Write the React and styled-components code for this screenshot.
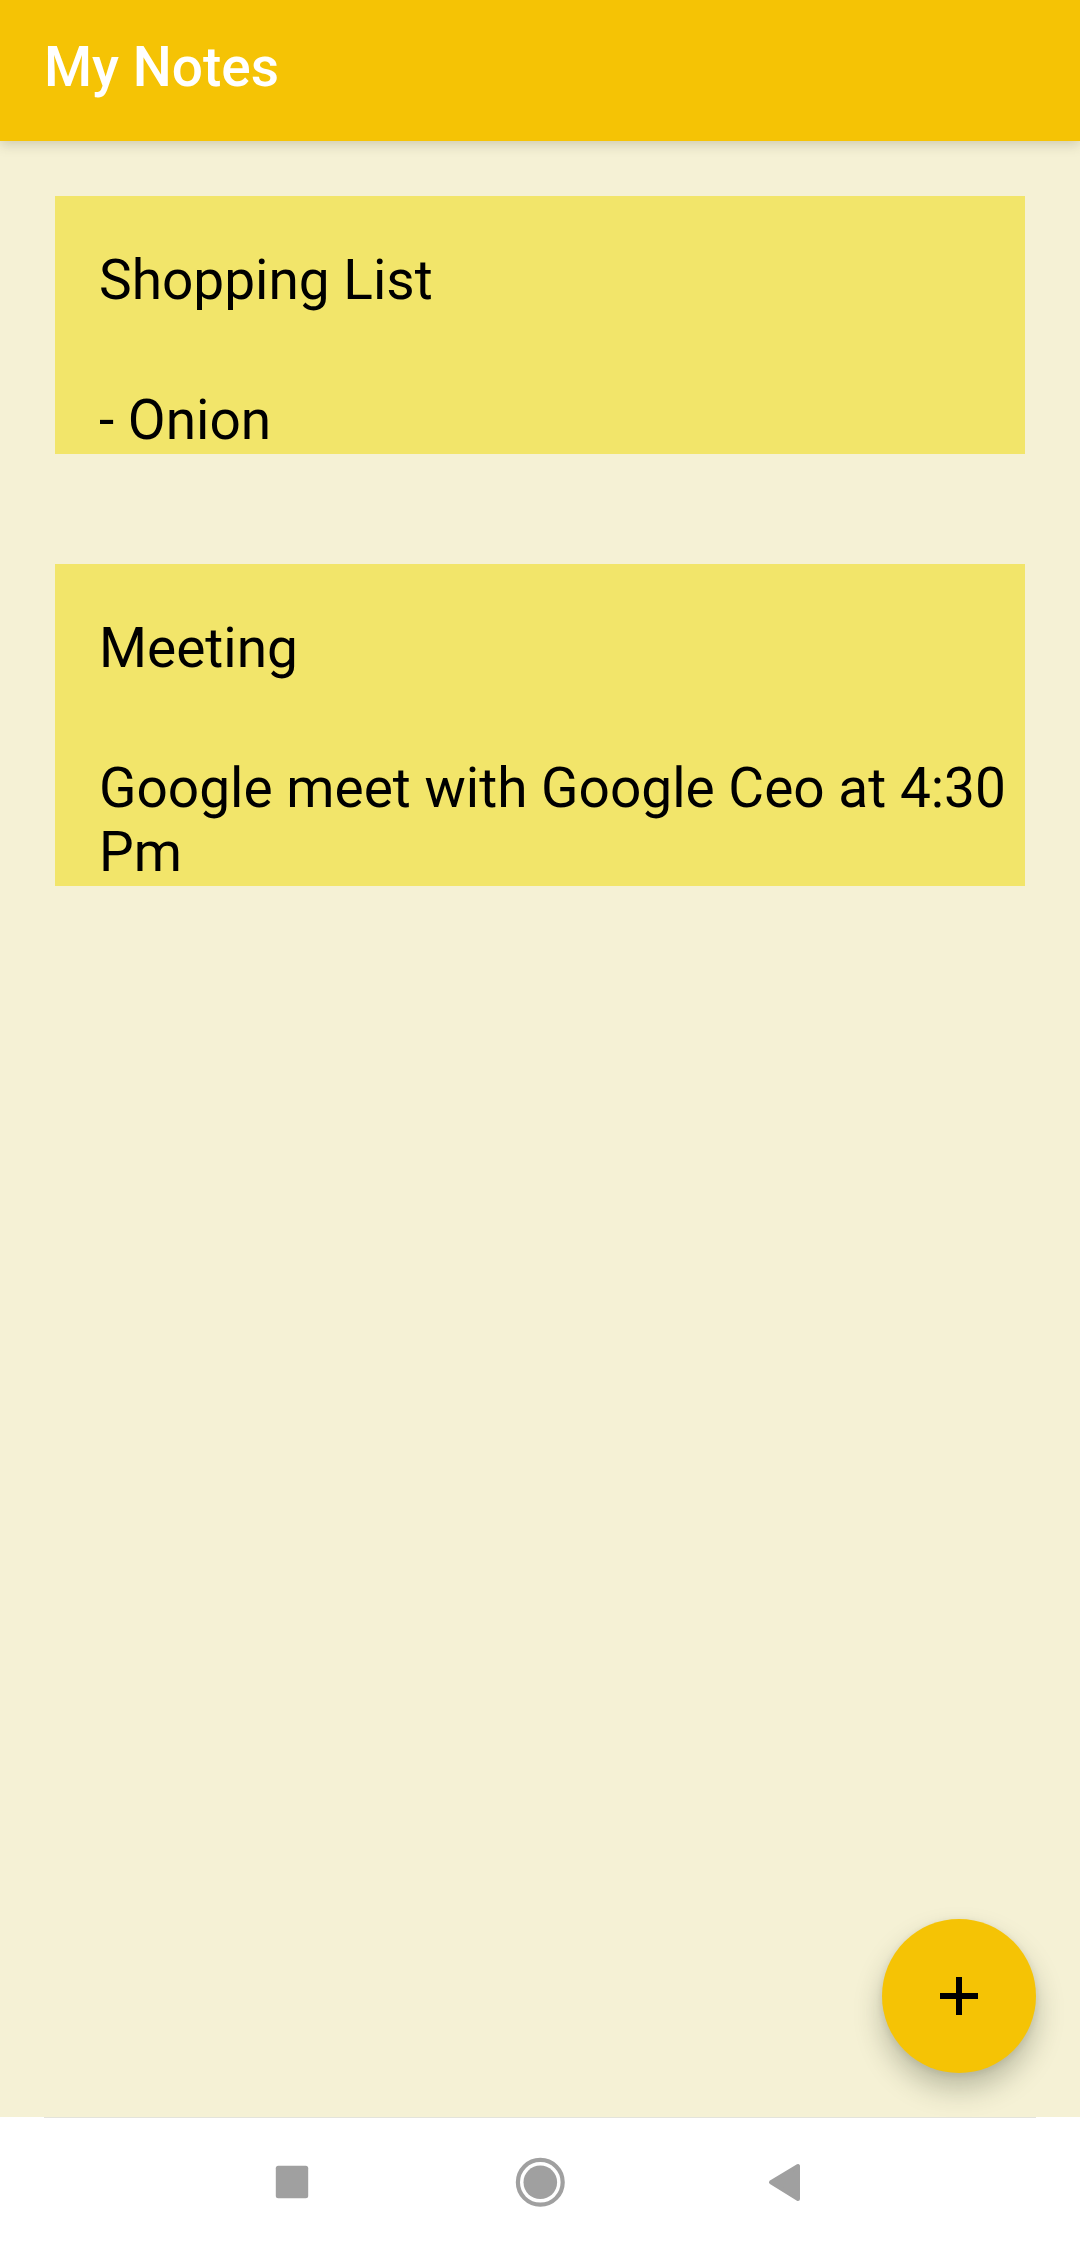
import React from "react";
import styled, { createGlobalStyle } from "styled-components";

const GlobalStyle = createGlobalStyle`
  *, *::before, *::after { box-sizing: border-box; }
  body {
    margin: 0;
    background: #f5f1d5;
    font-family: Roboto, "Noto Sans", sans-serif;
  }
`;

const Screen = styled.div`
  display: flex;
  flex-direction: column;
  min-height: 100vh;
`;

const AppBar = styled.header`
  padding: 35px 44px 42px;
  background: #f5c305;
  box-shadow: 0 3px 12px rgba(60, 60, 30, 0.22);
`;

const AppTitle = styled.h1`
  margin: 0;
  color: #fff;
  font-size: 55px;
  font-weight: 500;
  line-height: 64px;
`;

const NoteList = styled.main`
  display: flex;
  flex: 1;
  flex-direction: column;
  gap: 110px;
  padding: 55px;
`;

const Note = styled.article`
  display: flex;
  flex-direction: column;
  gap: 76px;
  padding: 52px 0 2px 44px;
  background: #f2e56a;
  color: #000;
  font-size: 55px;
  line-height: 64px;
`;

const NoteTitle = styled.h2`
  margin: 0;
  font: inherit;
`;

const NoteBody = styled.p`
  margin: 0;
`;

const AddButton = styled.button`
  position: fixed;
  right: 44px;
  bottom: 174px;
  display: grid;
  place-items: center;
  width: 154px;
  height: 154px;
  padding: 0;
  border: 0;
  border-radius: 50%;
  background: #f5c305;
  color: #000;
  box-shadow:
    0 16px 28px rgba(40, 50, 30, 0.28),
    0 2px 8px rgba(40, 50, 30, 0.1);
`;

const NavBar = styled.nav`
  display: flex;
  justify-content: center;
  height: 130px;
  background: #fff;

  &::before {
    content: "";
    position: absolute;
    left: 44px;
    right: 44px;
    height: 1px;
    background: #e4e4dc;
  }
`;

const NavButton = styled.button`
  display: grid;
  place-items: center;
  width: 248px;
  padding: 0;
  border: 0;
  background: none;
  color: #a0a0a0;
`;

const notes = [
  { title: "Shopping List", body: "- Onion" },
  { title: "Meeting", body: "Google meet with Google Ceo at 4:30 Pm" },
];

const PlusIcon = () => (
  <svg width="66" height="66" viewBox="0 0 66 66" fill="currentColor" aria-hidden="true">
    <path d="M30 14h6v16h16v6H36v16h-6V36H14v-6h16z" />
  </svg>
);

const RecentsIcon = () => (
  <svg width="64" height="64" viewBox="0 0 64 64" fill="currentColor" aria-hidden="true">
    <rect x="15.8" y="15.8" width="32.4" height="32.4" rx="2.5" />
  </svg>
);

const HomeIcon = () => (
  <svg width="64" height="64" viewBox="0 0 64 64" fill="currentColor" aria-hidden="true">
    <circle cx="32.3" cy="32.3" r="22.4" fill="none" stroke="currentColor" strokeWidth="4.2" />
    <circle cx="32.3" cy="32.3" r="16.8" />
  </svg>
);

const BackIcon = () => (
  <svg width="64" height="64" viewBox="0 0 64 64" fill="currentColor" aria-hidden="true">
    <path
      d="M15 32.3 42 16v33z"
      stroke="currentColor"
      strokeWidth="4"
      strokeLinejoin="round"
    />
  </svg>
);

export default function App() {
  return (
    <>
      <GlobalStyle />
      <Screen>
        <AppBar>
          <AppTitle>My Notes</AppTitle>
        </AppBar>
        <NoteList>
          {notes.map((note) => (
            <Note key={note.title}>
              <NoteTitle>{note.title}</NoteTitle>
              <NoteBody>{note.body}</NoteBody>
            </Note>
          ))}
        </NoteList>
        <NavBar aria-label="System">
          <NavButton type="button" aria-label="Recent apps"><RecentsIcon /></NavButton>
          <NavButton type="button" aria-label="Home"><HomeIcon /></NavButton>
          <NavButton type="button" aria-label="Back"><BackIcon /></NavButton>
        </NavBar>
      </Screen>
      <AddButton type="button" aria-label="Add note"><PlusIcon /></AddButton>
    </>
  );
}
